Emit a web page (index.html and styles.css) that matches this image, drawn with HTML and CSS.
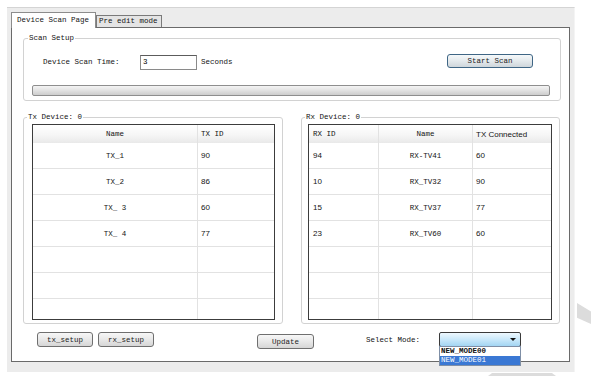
FILE: index.html
```html
<!DOCTYPE html>
<html lang="en">
<head>
    <meta charset="UTF-8">
    <meta name="viewport" content="width=device-width, initial-scale=1.0">
    <title>Device Scan Page</title>
    <link rel="stylesheet" href="styles.css">
</head>
<body>
    <div class="window">
        <div class="tabs">
            <div class="tab active">Device Scan Page</div>
            <div class="tab">Pre edit mode</div>
        </div>

        <div class="page">
            <fieldset class="group scan">
                <legend>Scan Setup</legend>
                <div class="scan-row">
                    <span class="scan-label">Device Scan Time:</span>
                    <input class="text-input" type="text" value="3">
                    <span class="unit">Seconds</span>
                    <button class="btn btn-default">Start Scan</button>
                </div>
                <div class="progress"></div>
            </fieldset>

            <div class="devices">
                <fieldset class="group tx">
                    <legend>Tx Device: 0</legend>
                    <div class="grid">
                        <div class="row head">
                            <div class="cell center">Name</div>
                            <div class="cell">TX ID</div>
                        </div>
                        <div class="row">
                            <div class="cell center">TX_1</div>
                            <div class="cell num">90</div>
                        </div>
                        <div class="row">
                            <div class="cell center">TX_2</div>
                            <div class="cell num">86</div>
                        </div>
                        <div class="row">
                            <div class="cell center">TX_ 3</div>
                            <div class="cell num">60</div>
                        </div>
                        <div class="row">
                            <div class="cell center">TX_ 4</div>
                            <div class="cell num">77</div>
                        </div>
                        <div class="row"><div class="cell"></div><div class="cell"></div></div>
                        <div class="row"><div class="cell"></div><div class="cell"></div></div>
                        <div class="row"><div class="cell"></div><div class="cell"></div></div>
                    </div>
                </fieldset>

                <fieldset class="group rx">
                    <legend>Rx Device: 0</legend>
                    <div class="grid">
                        <div class="row head">
                            <div class="cell first">RX ID</div>
                            <div class="cell center">Name</div>
                            <div class="cell sans">TX Connected</div>
                        </div>
                        <div class="row">
                            <div class="cell first num">94</div>
                            <div class="cell center">RX-TV41</div>
                            <div class="cell num">60</div>
                        </div>
                        <div class="row">
                            <div class="cell first num">10</div>
                            <div class="cell center">RX_TV32</div>
                            <div class="cell num">90</div>
                        </div>
                        <div class="row">
                            <div class="cell first num">15</div>
                            <div class="cell center">RX_TV37</div>
                            <div class="cell num">77</div>
                        </div>
                        <div class="row">
                            <div class="cell first num">23</div>
                            <div class="cell center">RX_TV60</div>
                            <div class="cell num">60</div>
                        </div>
                        <div class="row"><div class="cell"></div><div class="cell"></div><div class="cell"></div></div>
                        <div class="row"><div class="cell"></div><div class="cell"></div><div class="cell"></div></div>
                        <div class="row"><div class="cell"></div><div class="cell"></div><div class="cell"></div></div>
                    </div>
                </fieldset>
            </div>

            <div class="actions">
                <button class="btn tx-setup">tx_setup</button>
                <button class="btn rx-setup">rx_setup</button>
                <button class="btn update">Update</button>
                <span class="select-label">Select Mode:</span>
                <div class="combo">
                    <span class="combo-arrow"></span>
                    <div class="combo-list">
                        <div class="combo-item">NEW_MODE00</div>
                        <div class="combo-item selected">NEW_MODE01</div>
                    </div>
                </div>
            </div>
        </div>
    </div>

    <!-- faint background marks behind the dialog -->
    <div class="mark mark-side"></div>
    <div class="mark mark-bottom"></div>
</body>
</html>
```

FILE: styles.css
```css
body {
    margin: 0;
    background: #fff;
    font-family: "Liberation Mono", monospace;
    font-size: 7.5px;
    color: #141414;
}
.window {
    margin: 7px 0 0 7px;
    width: 568px;
    height: 365px;
    box-sizing: border-box;
    background: #ececec;
    border-top: 1px solid #d4d4d4;
    border-right: 1px solid #f4f4f4;
    padding: 4px 4px 0 4px;
}
.tabs {
    display: flex;
    align-items: flex-end;
    height: 16px;
    margin-bottom: -1px;
    position: relative;
    z-index: 1;
}
.tab {
    width: 66px;
    height: 12px;
    margin-bottom: 1px;
    box-sizing: border-box;
    padding-left: 2px;
    line-height: 11px;
    border: 1px solid #7a7a7a;
    border-bottom: none;
    background: #e4e4e4;
    white-space: nowrap;
}
.tab.active {
    width: 85px;
    height: 16px;
    margin-bottom: 0;
    padding-left: 5px;
    line-height: 15px;
    background: #fff;
    border-color: #8c8c8c;
}
.page {
    height: 335px;
    box-sizing: border-box;
    border: 1px solid #6a6a6a;
    background: #fff;
    padding: 6px 8px 0 11px;
}
.group {
    margin: 0;
    min-width: 0;
    border: 1px solid #d2d2d2;
    border-radius: 3px;
}
.group legend {
    padding: 0 1px;
    line-height: 8px;
}
.scan {
    padding: 12px 10px 4px 8px;
}
.scan legend {
    margin-left: -4px;
}
.scan-row {
    display: flex;
    align-items: center;
    height: 16px;
    padding-left: 11px;
}
.scan-label {
    width: 97px;
}
.text-input {
    width: 57px;
    height: 15px;
    box-sizing: border-box;
    margin: 0;
    padding: 0 2px;
    border: 1px solid #8a8a8a;
    border-top-color: #5c5c5c;
    font: inherit;
    color: #000;
}
.unit {
    margin-left: 4px;
}
.btn {
    width: 56px;
    height: 15px;
    box-sizing: border-box;
    margin: 0;
    padding: 0;
    border: 1px solid #6f6f6f;
    border-radius: 3px;
    background: linear-gradient(#f7f7f7, #e8e8e8 50%, #d6d6d6);
    font: inherit;
    color: #222;
}
.btn-default {
    width: 86px;
    height: 14px;
    align-self: flex-start;
    margin-left: auto;
    margin-right: 17px;
    border-color: #3f6685;
    background: linear-gradient(#f5f8fa, #e4e9ec 50%, #cfd6db);
}
.progress {
    margin-top: 15px;
    height: 11px;
    box-sizing: border-box;
    border: 1px solid #8e8e8e;
    border-radius: 2px;
    background: linear-gradient(#f4f4f4, #e2e2e2 50%, #cdcdcd);
}
.devices {
    display: grid;
    grid-template-columns: 260px 259px;
    column-gap: 18px;
    margin-top: 12px;
}
.tx {
    padding: 3px 7px 3px 8px;
}
.rx {
    padding: 3px 7px 3px 6px;
}
.tx legend {
    margin-left: -5px;
}
.rx legend {
    margin-left: -3px;
}
.grid {
    height: 196px;
    box-sizing: border-box;
    border: 1px solid #3c3c3c;
    overflow: hidden;
}
.row {
    display: grid;
    height: 26px;
    box-sizing: border-box;
    border-bottom: 1px solid #e2e2e2;
}
.tx .row {
    grid-template-columns: 165px 1fr;
}
.rx .row {
    grid-template-columns: 70px 94px 1fr;
}
.row.head {
    height: 18px;
    border-bottom: none;
    background: linear-gradient(#ffffff, #f6f6f6 55%, #e9e9e9);
}
.cell {
    display: flex;
    align-items: center;
    padding-left: 3px;
    border-right: 1px solid #e2e2e2;
    white-space: nowrap;
}
.cell:last-child {
    border-right: none;
}
.cell.center {
    justify-content: center;
    padding-left: 0;
}
.cell.first {
    padding-left: 4px;
}
.num,
.sans {
    font-family: "Liberation Sans", Arial, sans-serif;
    font-size: 8px;
}
.actions {
    display: flex;
    align-items: flex-start;
    margin-top: 8px;
}
.tx-setup {
    margin-left: 14px;
}
.rx-setup {
    margin-left: 5px;
}
.update {
    width: 57px;
    margin-left: 103px;
    margin-top: 2px;
}
.select-label {
    width: 73px;
    margin-left: 52px;
    margin-top: 1px;
    line-height: 15px;
}
.combo {
    position: relative;
    width: 82px;
    height: 15px;
    box-sizing: border-box;
    border: 1px solid #3a3a3a;
    border-radius: 2px;
    background: linear-gradient(#eef8fe, #c9e8fa 50%, #a3d5f3);
}
.combo-arrow {
    position: absolute;
    right: 4px;
    top: 5px;
    border-left: 3px solid transparent;
    border-right: 3px solid transparent;
    border-top: 3px solid #111;
}
.combo-list {
    position: absolute;
    top: 100%;
    left: -1px;
    width: 82px;
    box-sizing: border-box;
    border: 1px solid #7f8fa6;
    background: #fff;
}
.combo-item {
    height: 9px;
    line-height: 9px;
    padding-left: 1px;
    font-weight: bold;
    color: #111;
}
.combo-item.selected {
    font-weight: normal;
    background: #3a78d4;
    color: #fff;
}
.mark {
    position: absolute;
    background: #dcdcdc;
}
.mark-side {
    left: 577px;
    top: 303px;
    width: 14px;
    height: 21px;
    clip-path: polygon(0 0, 100% 40%, 100% 100%, 0 70%);
}
.mark-bottom {
    left: 488px;
    top: 373px;
    width: 68px;
    height: 3px;
    clip-path: polygon(6% 0, 94% 0, 100% 100%, 0 100%);
}
```
